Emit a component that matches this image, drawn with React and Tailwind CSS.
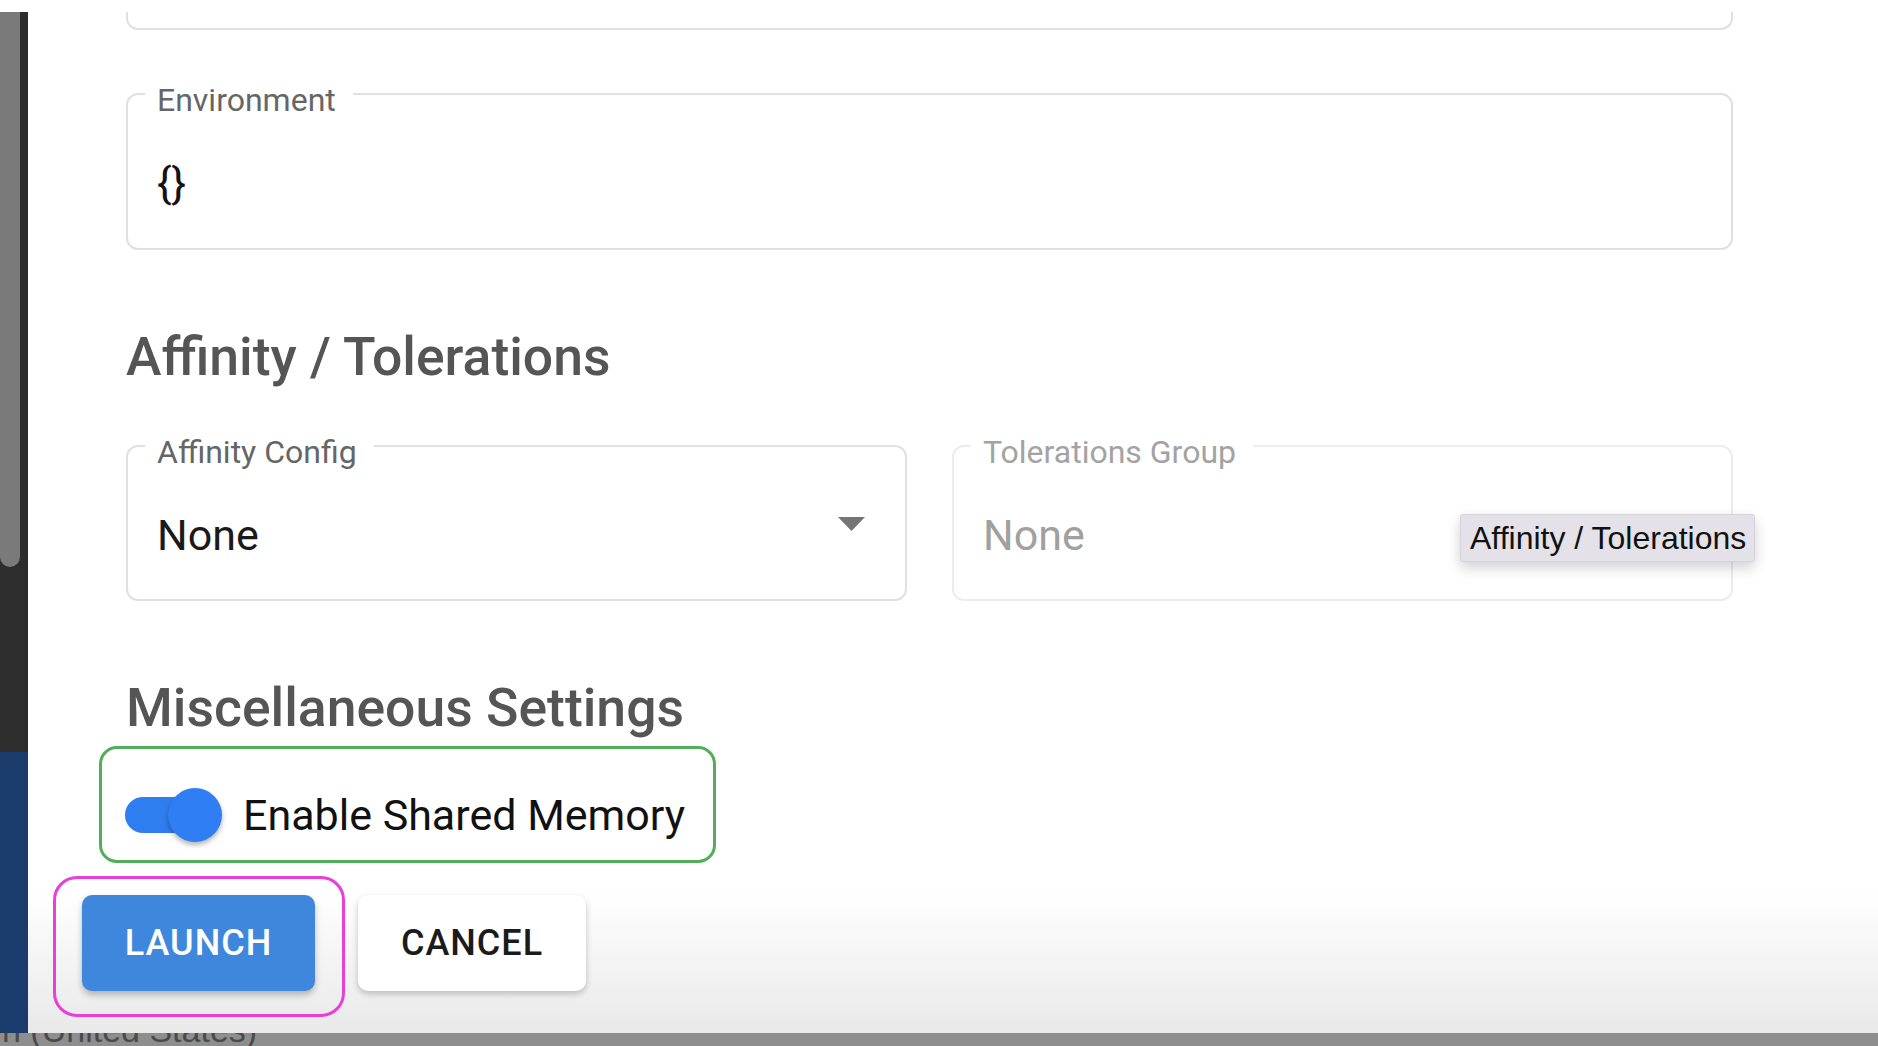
import React, { useState } from 'react';

const OutlinedField = ({ label, disabled, children, className = '' }) => (
  <div
    className={`relative rounded-[12px] border-2 ${
      disabled ? 'border-[#ececec]' : 'border-[#e0e0e0]'
    } ${className}`}
  >
    <span
      className={`absolute left-[17px] -top-[11px] bg-white pl-[12px] pr-[17px] text-[32px] leading-none ${
        disabled ? 'text-[#a3a3a3]' : 'text-[#666666]'
      }`}
    >
      {label}
    </span>
    {children}
  </div>
);

const App = () => {
  const [sharedMemory, setSharedMemory] = useState(true);

  return (
    <div className="flex h-[1046px] w-[1878px] flex-col overflow-hidden bg-white font-['Roboto',sans-serif]">
      <div className="h-[12px] shrink-0" />

      <div className="flex h-[1021px] shrink-0">
        {/* Sidebar edge */}
        <div className="flex w-[28px] shrink-0 flex-col">
          <div className="h-[740px] bg-[#2d2d2d]">
            <div className="h-[555px] w-[20px] rounded-b-[10px] bg-[#7a7a7a]" />
          </div>
          <div className="h-[281px] bg-[#1b3b6c]" />
        </div>

        {/* Form panel */}
        <div className="flex flex-1 flex-col overflow-hidden bg-linear-to-b from-white from-[86%] to-[#e9e9e9] pl-[98px]">
          <div className="flex w-[1607px] flex-col">
            {/* Previous field (scrolled) */}
            <div className="h-[18px] rounded-b-[12px] border-2 border-t-0 border-[#e0e0e0]" />

            {/* Environment */}
            <OutlinedField label="Environment" className="mt-[63px] h-[157px]">
              <div className="pl-[29px] pt-[67px] text-[43px] leading-none text-[#111111]">{'{}'}</div>
            </OutlinedField>

            {/* Affinity / Tolerations */}
            <h2 className="mt-[80px] text-[53.5px] font-medium leading-none text-[#555555]">
              Affinity / Tolerations
            </h2>
            <div className="mt-[61px] grid grid-cols-2 gap-[45px]">
              <OutlinedField label="Affinity Config" className="h-[156px]">
                <div className="flex items-start justify-between pl-[29px] pr-[40px] pt-[67px]">
                  <span className="text-[43px] leading-none text-[#1a1a1a]">None</span>
                  <svg className="mt-[3px]" width="27" height="14" viewBox="0 0 27 14">
                    <polygon points="0,0 27,0 13.5,14" fill="#757575" />
                  </svg>
                </div>
              </OutlinedField>
              <OutlinedField label="Tolerations Group" disabled className="h-[156px]">
                <div className="pl-[29px] pt-[67px] text-[43px] leading-none text-[#a0a0a0]">None</div>
                <div className="absolute left-[506px] top-[67px] flex h-[48px] w-[295px] items-center rounded-[3px] border border-[#d6d2da] bg-[#e4e1e8] pl-[9px] font-['Liberation_Sans',sans-serif] text-[32px] leading-none text-[#111111] shadow-[0_6px_14px_rgba(0,0,0,0.18)]">
                  Affinity / Tolerations
                </div>
              </OutlinedField>
            </div>

            {/* Miscellaneous */}
            <h2 className="mt-[80px] text-[53.5px] font-medium leading-none text-[#555555]">
              Miscellaneous Settings
            </h2>
            <div className="-ml-[27px] mt-[12px] h-[117px] w-[617px] rounded-[18px] border-[3px] border-[#52ae5b] pl-[23px] pt-[39px]">
              <label className="flex cursor-pointer items-center gap-[21px]">
                <button
                  type="button"
                  onClick={() => setSharedMemory(!sharedMemory)}
                  className="relative h-[54px] w-[97px] shrink-0"
                >
                  <span className="absolute left-0 top-[9px] h-[36px] w-[90px] rounded-full bg-[#2f7ef0]" />
                  <span
                    className={`absolute top-0 h-[54px] w-[54px] rounded-full shadow-[0_3px_5px_rgba(0,0,0,0.3)] ${
                      sharedMemory ? 'right-0 bg-[#2f7ef4]' : 'left-0 bg-white'
                    }`}
                  />
                </button>
                <span className="text-[43px] leading-none text-[#111111]">Enable Shared Memory</span>
              </label>
            </div>

            {/* Actions */}
            <div className="-ml-[73px] mt-[13px] flex items-start">
              <div className="h-[141px] w-[292px] rounded-[24px] border-[3px] border-[#e83fd6] pl-[26px] pt-[16px]">
                <button className="h-[96px] w-[233px] rounded-[10px] bg-[#3f87dc] text-[36px] font-medium tracking-[1px] text-white shadow-[0_4px_6px_rgba(0,0,0,0.25)]">
                  LAUNCH
                </button>
              </div>
              <button className="ml-[13px] mt-[19px] h-[96px] w-[228px] rounded-[10px] bg-white text-[36px] font-medium tracking-[1px] text-[#1b1b1b] shadow-[0_3px_6px_rgba(0,0,0,0.22)]">
                CANCEL
              </button>
            </div>
          </div>
        </div>
      </div>

      {/* Status bar behind */}
      <div className="h-[13px] shrink-0 overflow-hidden bg-[#8e8e8e]">
        <div className="-mt-[20px] whitespace-nowrap pl-[2px] font-['Liberation_Sans',sans-serif] text-[34px] leading-none text-[#4a4a4a]">
          n (United States)
        </div>
      </div>
    </div>
  );
};

export default App;
